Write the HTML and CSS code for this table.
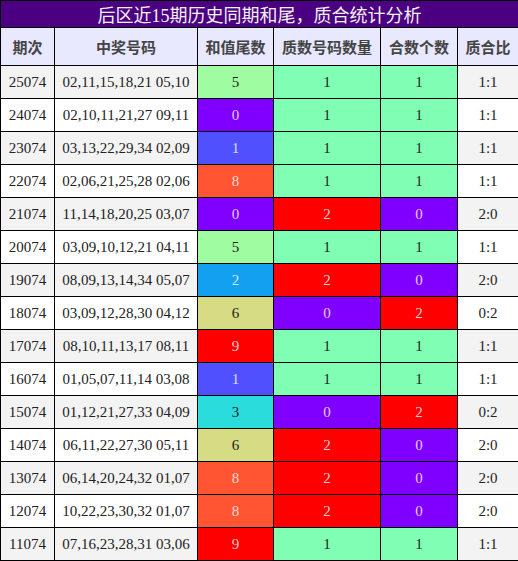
FILE: index.html
```html
<!DOCTYPE html>
<html lang="zh-CN">
<head>
    <meta charset="UTF-8">
    <meta name="viewport" content="width=device-width, initial-scale=1.0">
    <title>后区近15期历史同期和尾</title>

    <link rel="stylesheet" href="styles.css">
</head>
<body>
    <table class="stats">
        <colgroup>
            <col class="col-period">
            <col class="col-numbers">
            <col class="col-tail">
            <col class="col-prime">
            <col class="col-composite">
            <col class="col-ratio">
        </colgroup>
        <thead>
            <tr class="title-row">
                <th colspan="6">后区近15期历史同期和尾，质合统计分析</th>
            </tr>
            <tr class="head-row">
                <th>期次</th>
                <th>中奖号码</th>
                <th>和值尾数</th>
                <th>质数号码数量</th>
                <th>合数个数</th>
                <th>质合比</th>
            </tr>
        </thead>
        <tbody>
            <tr><td>25074</td><td>02,11,15,18,21 05,10</td><td class="t5">5</td><td class="n1">1</td><td class="n1">1</td><td>1:1</td></tr>
            <tr><td>24074</td><td>02,10,11,21,27 09,11</td><td class="t0">0</td><td class="n1">1</td><td class="n1">1</td><td>1:1</td></tr>
            <tr><td>23074</td><td>03,13,22,29,34 02,09</td><td class="t1">1</td><td class="n1">1</td><td class="n1">1</td><td>1:1</td></tr>
            <tr><td>22074</td><td>02,06,21,25,28 02,06</td><td class="t8">8</td><td class="n1">1</td><td class="n1">1</td><td>1:1</td></tr>
            <tr><td>21074</td><td>11,14,18,20,25 03,07</td><td class="t0">0</td><td class="n2">2</td><td class="n0">0</td><td>2:0</td></tr>
            <tr><td>20074</td><td>03,09,10,12,21 04,11</td><td class="t5">5</td><td class="n1">1</td><td class="n1">1</td><td>1:1</td></tr>
            <tr><td>19074</td><td>08,09,13,14,34 05,07</td><td class="t2">2</td><td class="n2">2</td><td class="n0">0</td><td>2:0</td></tr>
            <tr><td>18074</td><td>03,09,12,28,30 04,12</td><td class="t6">6</td><td class="n0">0</td><td class="n2">2</td><td>0:2</td></tr>
            <tr><td>17074</td><td>08,10,11,13,17 08,11</td><td class="t9">9</td><td class="n1">1</td><td class="n1">1</td><td>1:1</td></tr>
            <tr><td>16074</td><td>01,05,07,11,14 03,08</td><td class="t1">1</td><td class="n1">1</td><td class="n1">1</td><td>1:1</td></tr>
            <tr><td>15074</td><td>01,12,21,27,33 04,09</td><td class="t3">3</td><td class="n0">0</td><td class="n2">2</td><td>0:2</td></tr>
            <tr><td>14074</td><td>06,11,22,27,30 05,11</td><td class="t6">6</td><td class="n2">2</td><td class="n0">0</td><td>2:0</td></tr>
            <tr><td>13074</td><td>06,14,20,24,32 01,07</td><td class="t8">8</td><td class="n2">2</td><td class="n0">0</td><td>2:0</td></tr>
            <tr><td>12074</td><td>10,22,23,30,32 01,07</td><td class="t8">8</td><td class="n2">2</td><td class="n0">0</td><td>2:0</td></tr>
            <tr><td>11074</td><td>07,16,23,28,31 03,06</td><td class="t9">9</td><td class="n1">1</td><td class="n1">1</td><td>1:1</td></tr>
        </tbody>
    </table>
</body>
</html>
```

FILE: styles.css
```css
body {
    margin: 0;
    background-color: #fff;
}

.stats {
    width: 518px;
    table-layout: fixed;
    border-collapse: collapse;

    font-family: 'Liberation Serif', 'Noto Sans CJK SC', serif;
    font-size: 15px;
    color: #222;
}

.col-period { width: 54px; }
.col-numbers { width: 143px; }
.col-tail { width: 76px; }
.col-prime { width: 107px; }
.col-composite { width: 77px; }
.col-ratio { width: 61px; }

.stats th,
.stats td {
    border: 1px solid #000;
    padding: 0;
    text-align: center;
}

.title-row th {
    height: 26px;

    background-color: #4b0082;
    color: #f2f2f2;

    font-family: 'Liberation Serif', 'Noto Sans CJK SC', serif;
    font-size: 18px;
    font-weight: normal;
}

.head-row th {
    height: 37px;

    background-color: #e8e8ff;
    color: #444;

    font-family: 'Noto Sans CJK SC', sans-serif;
    font-size: 15px;
    font-weight: bold;
}

.stats tbody td {
    height: 32px;
}

.stats tbody tr:nth-child(odd) {
    background-color: #f3f3f3;
}

.stats tbody tr:nth-child(even) {
    background-color: #fff;
}

/* 和值尾数 colours */
.t0 { background-color: #8000ff; color: rgba(255, 255, 255, 0.8); }
.t1 { background-color: #5050ff; color: rgba(255, 255, 255, 0.8); }
.t2 { background-color: #14a0f0; color: rgba(255, 255, 255, 0.8); }
.t3 { background-color: #2adcdc; color: #222; }
.t5 { background-color: #a0fca0; color: #222; }
.t6 { background-color: #d6dc84; color: #222; }
.t8 { background-color: #ff5533; color: rgba(255, 255, 255, 0.8); }
.t9 { background-color: #ff0000; color: rgba(255, 255, 255, 0.8); }

/* 质数 / 合数 counts */
.n0 { background-color: #8000ff; color: rgba(255, 255, 255, 0.8); }
.n1 { background-color: #80ffb4; color: #222; }
.n2 { background-color: #ff0000; color: rgba(255, 255, 255, 0.8); }
```
